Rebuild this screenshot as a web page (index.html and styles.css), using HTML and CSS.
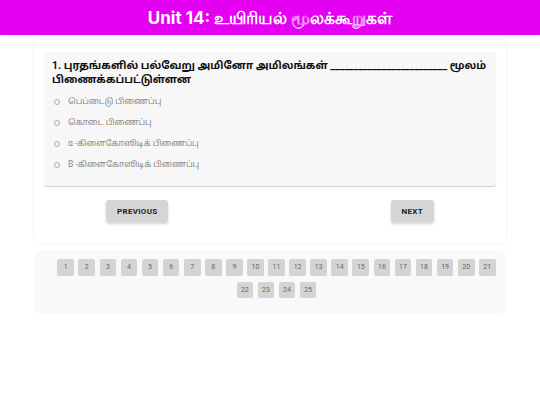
FILE: index.html
```html
<!DOCTYPE html>
<html lang="ta">
<head>
<meta charset="utf-8">
<title>Unit 14</title>
<link rel="stylesheet" href="styles.css">
</head>
<body>
<header class="topbar">
  <h1 class="title">Unit 14: உயிரியல் மூலக்கூறுகள்</h1>
</header>
<main class="page">
  <section class="card">
    <div class="question">
      <p class="qtext">1. புரதங்களில் பல்வேறு அமினோ அமிலங்கள் _________________________ மூலம் பிணைக்கப்பட்டுள்ளன</p>
      <ul class="options">
        <li class="option"><span class="radio"></span>பெப்டைடு பிணைப்பு</li>
        <li class="option"><span class="radio"></span>கொடை பிணைப்பு</li>
        <li class="option"><span class="radio"></span>α -கிளைகோஸிடிக் பிணைப்பு</li>
        <li class="option"><span class="radio"></span>B -கிளைகோஸிடிக் பிணைப்பு</li>
      </ul>
    </div>
    <div class="nav">
      <button class="btn">PREVIOUS</button>
      <button class="btn">NEXT</button>
    </div>
  </section>
  <section class="pager">
    <span class="pg">1</span><span class="pg">2</span><span class="pg">3</span><span class="pg">4</span><span class="pg">5</span><span class="pg">6</span><span class="pg">7</span><span class="pg">8</span><span class="pg">9</span><span class="pg">10</span><span class="pg">11</span><span class="pg">12</span><span class="pg">13</span><span class="pg">14</span><span class="pg">15</span><span class="pg">16</span><span class="pg">17</span><span class="pg">18</span><span class="pg">19</span><span class="pg">20</span><span class="pg">21</span><span class="pg">22</span><span class="pg">23</span><span class="pg">24</span><span class="pg">25</span>
  </section>
</main>
</body>
</html>
```

FILE: styles.css
```css
* { box-sizing: border-box; }
html, body { margin: 0; padding: 0; }
body {
  background: #ffffff;
  font-family: Roboto, "Noto Sans", "Noto Sans Tamil", sans-serif;
  color: #111;
  width: 540px;
}
.topbar {
  background: #e400f0;
  height: 35px;
  display: flex;
  align-items: center;
  justify-content: center;
  box-shadow: 0 2px 5px rgba(0,0,0,0.08);
  position: relative;
}
.title {
  margin: 0;
  color: #fff;
  font-family: Inter, Roboto, "Noto Sans", sans-serif;
  font-weight: 700;
  font-size: 17px;
  line-height: 20px;
}
.page {
  padding: 5px 34px 0;
}
.card {
  background: #fff;
  border-radius: 6px;
  box-shadow: 0 0 3px rgba(0,0,0,0.08);
  padding: 12px 10px 22px;
}
.question {
  background: #f7f7f7;
  border-radius: 3px;
  box-shadow: 0 1px 1px rgba(0,0,0,0.18);
  padding: 7px 8px 11px;
}
.qtext {
  margin: 0;
  font-size: 10.5px;
  line-height: 14px;
  font-weight: 700;
  color: #111;
}
.options {
  list-style: none;
  margin: 4px 0 0;
  padding: 0 0 0 2px;
}
.option {
  display: flex;
  align-items: center;
  height: 21px;
  font-size: 8.5px;
  color: #888;
}
.radio {
  width: 6px;
  height: 6px;
  border: 1px solid #aaa;
  border-radius: 50%;
  margin-right: 8px;
}
.nav {
  display: flex;
  justify-content: space-between;
  padding: 14px 62px 0;
}
.btn {
  height: 22px;
  border: none;
  border-radius: 3px;
  background: #d5d5d5;
  box-shadow: 0 2px 3px rgba(0,0,0,0.18);
  font-family: Roboto, sans-serif;
  font-weight: 700;
  font-size: 8px;
  letter-spacing: 0.3px;
  color: #222;
  padding: 0 11px;
}
.pager {
  margin-top: 6px;
  background: #f8f9fb;
  border-radius: 8px;
  display: flex;
  flex-wrap: wrap;
  justify-content: center;
  gap: 6px 4.4px;
  padding: 9px 10px 16px 23px;
}
.pg {
  width: 16.7px;
  height: 16.7px;
  background: #d4d4d4;
  border-radius: 2px;
  display: flex;
  align-items: center;
  justify-content: center;
  font-size: 7px;
  color: #666;
}
```
